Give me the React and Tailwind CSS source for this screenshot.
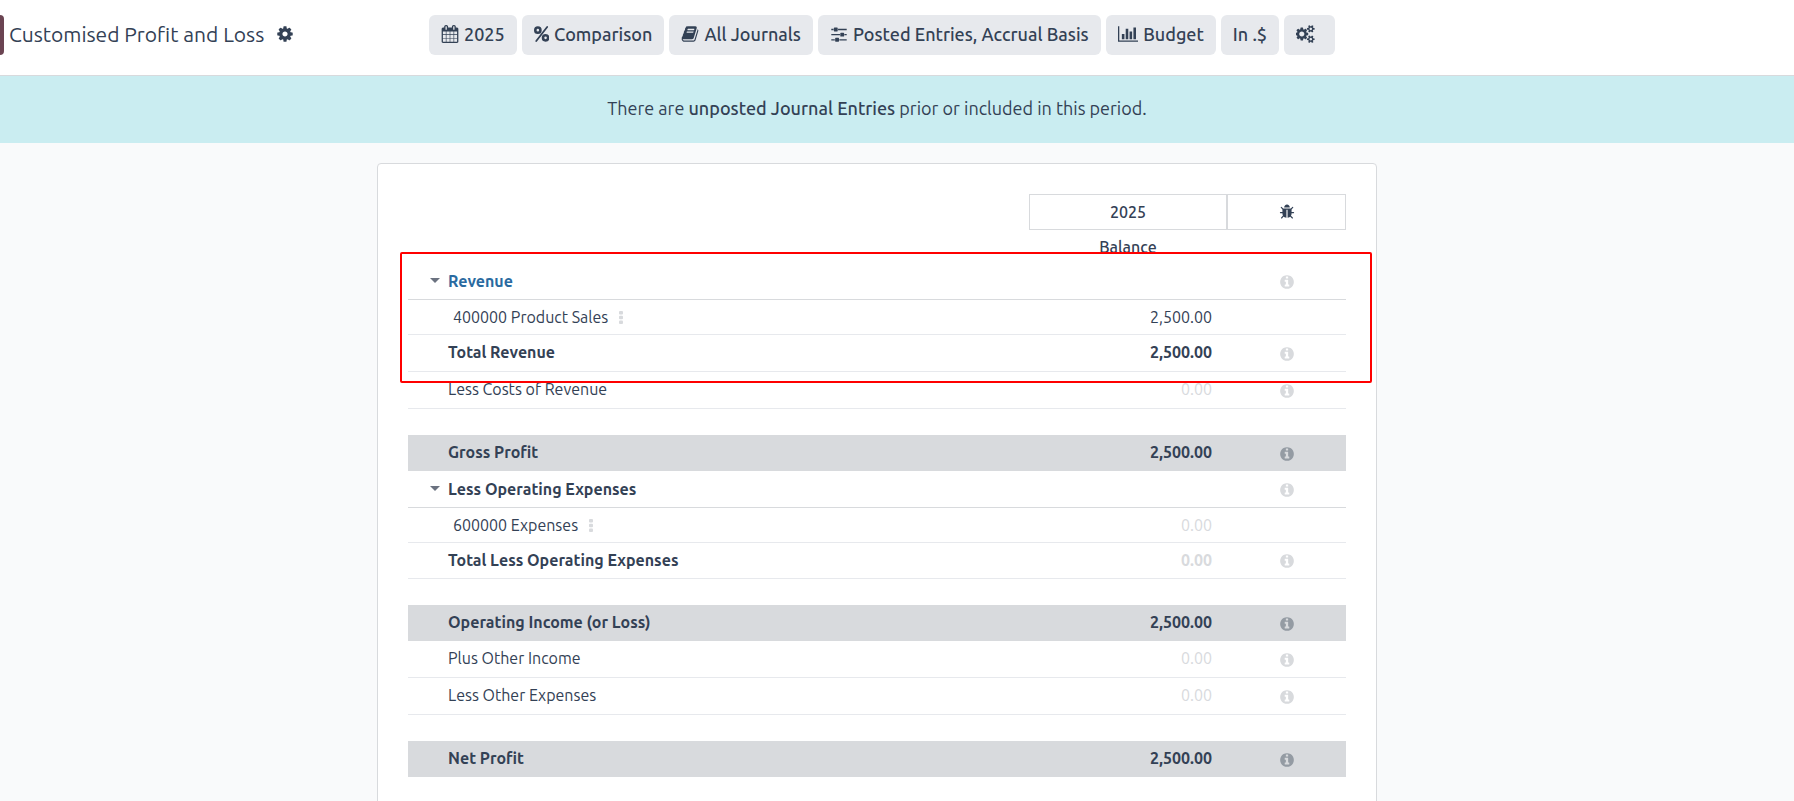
import { useState } from "react";

const ICONS = {
  cog: {
    width: 1792,
    path: "M1152 896q0-106-75-181t-181-75-181 75-75 181 75 181 181 75 181-75 75-181zm512-109v222q0 12-8 23t-20 13l-185 28q-19 54-39 91 35 50 107 138 10 12 10 25t-9 23q-27 37-99 108t-94 71q-12 0-26-9l-138-108q-44 23-91 38-16 136-29 186-7 28-36 28h-222q-14 0-24.5-8.5t-11.5-21.5l-28-184q-49-16-90-37l-141 107q-10 9-25 9-14 0-25-11-126-114-165-168-7-10-7-23 0-12 8-23 15-21 51-66.5t54-70.5q-27-50-41-99l-183-27q-13-2-21-12.5t-8-23.5v-222q0-12 8-23t19-13l186-28q14-46 39-92-40-57-107-138-10-12-10-24 0-10 9-23 26-36 98.5-107.5t94.5-71.5q13 0 26 10l138 107q44-23 91-38 16-136 29-186 7-28 36-28h222q14 0 24.5 8.5t11.5 21.5l28 184q49 16 90 37l142-107q9-9 24-9 13 0 25 10 129 119 165 170 7 8 7 22 0 12-8 23-15 21-51 66.5t-54 70.5q26 50 41 98l183 28q13 2 21 12.5t8 23.5z",
  },
  cogs: {
    width: 1920,
    path: "M832 896q0-106-75-181t-181-75-181 75-75 181 75 181 181 75 181-75 75-181zm768 512q0-52-38-90t-90-38-90 38-38 90q0 53 37.5 90.5t90.5 37.5 90.5-37.5 37.5-90.5zm0-1024q0-52-38-90t-90-38-90 38-38 90q0 53 37.5 90.5t90.5 37.5 90.5-37.5 37.5-90.5zm-384 421v185q0 10-7 19.5t-16 10.5l-155 24q-11 35-32 76 34 48 90 115 7 11 7 20 0 12-7 19-23 30-82.5 89.5t-78.5 59.5q-11 0-21-7l-115-90q-37 19-77 31-11 108-23 155-7 24-30 24h-186q-11 0-20-7.5t-10-17.5l-23-153q-34-10-75-31l-118 89q-7 7-20 7-11 0-21-8-144-133-144-160 0-9 7-19 10-14 41-53t47-61q-23-44-35-82l-152-24q-10-1-17-9.5t-7-19.5v-185q0-10 7-19.5t16-10.5l155-24q11-35 32-76-34-48-90-115-7-11-7-20 0-12 7-20 22-30 82-89t79-59q11 0 21 7l115 90q34-18 77-32 11-108 23-154 7-24 30-24h186q11 0 20 7.5t10 17.5l23 153q34 10 75 31l118-89q8-7 20-7 11 0 21 8 144 133 144 160 0 8-7 19-12 16-42 54t-45 60q23 48 34 82l152 23q10 2 17 10.5t7 19.5zm640 533v140q0 16-149 31-12 27-30 52 51 113 51 138 0 4-4 7-122 71-124 71-8 0-46-47t-52-68q-20 2-30 2t-30-2q-14 21-52 68t-46 47q-2 0-124-71-4-3-4-7 0-25 51-138-18-25-30-52-149-15-149-31v-140q0-16 149-31 13-29 30-52-51-113-51-138 0-4 4-7 4-2 35-20t59-34 30-16q8 0 46 46.5t52 67.5q20-2 30-2t30 2q51-71 92-112l6-2q4 0 124 70 4 3 4 7 0 25-51 138 17 23 30 52 149 15 149 31zm0-1024v140q0 16-149 31-12 27-30 52 51 113 51 138 0 4-4 7-122 71-124 71-8 0-46-47t-52-68q-20 2-30 2t-30-2q-14 21-52 68t-46 47q-2 0-124-71-4-3-4-7 0-25 51-138-18-25-30-52-149-15-149-31v-140q0-16 149-31 13-29 30-52-51-113-51-138 0-4 4-7 4-2 35-20t59-34 30-16q8 0 46 46.5t52 67.5q20-2 30-2t30 2q51-71 92-112l6-2q4 0 124 70 4 3 4 7 0 25-51 138 17 23 30 52 149 15 149 31z",
  },
  calendar: {
    width: 1792,
    path: "M192 1664h288v-288h-288v288zm352 0h320v-288h-320v288zm-352-352h288v-320h-288v320zm352 0h320v-320h-320v320zm-352-384h288v-288h-288v288zm736 736h320v-288h-320v288zm-384-736h320v-288h-320v288zm768 736h288v-288h-288v288zm-384-352h320v-320h-320v320zm-352-864v-288q0-13-9.5-22.5t-22.5-9.5h-64q-13 0-22.5 9.5t-9.5 22.5v288q0 13 9.5 22.5t22.5 9.5h64q13 0 22.5-9.5t9.5-22.5zm736 864h288v-320h-288v320zm-384-384h320v-288h-320v288zm384 0h288v-288h-288v288zm32-480v-288q0-13-9.5-22.5t-22.5-9.5h-64q-13 0-22.5 9.5t-9.5 22.5v288q0 13 9.5 22.5t22.5 9.5h64q13 0 22.5-9.5t9.5-22.5zm384-64v1280q0 52-38 90t-90 38h-1408q-52 0-90-38t-38-90v-1280q0-52 38-90t90-38h128v-96q0-66 47-113t113-47h64q66 0 113 47t47 113v96h384v-96q0-66 47-113t113-47h64q66 0 113 47t47 113v96h128q52 0 90 38t38 90z",
  },
  book: {
    width: 1792,
    path: "M1703 478q40 57 18 129l-275 906q-19 64-76.5 107.5t-122.5 43.5h-923q-77 0-148.5-53.5t-99.5-131.5q-24-67-2-127 0-4 3-27t4-37q1-8-3-21.5t-3-19.5q2-11 8-21t16.5-23.5 16.5-23.5q23-38 45-91.5t30-91.5q3-10 .5-30t-.5-28q3-11 17-28t17-23q21-36 42-92t25-90q1-9-2.5-32t.5-28q4-13 22-30.5t22-22.5q19-26 42.5-84.5t27.5-96.5q1-8-3-25.5t-2-26.5q2-8 9-18t18-23 17-21q8-12 16.5-30.5t15-35 16-36 19.5-32 26.5-23.5 36-11.5 47.5 5.5l-1 3q38-9 51-9h761q74 0 114 56t18 130l-274 906q-36 119-71.5 153.5t-128.5 34.5h-869q-27 0-38 15-11 16-1 43 24 70 144 70h923q29 0 56-15.5t35-41.5l300-987q7-22 5-57 38 15 59 43zm-1064 2q-4 13 2 22.5t20 9.5h608q13 0 25.5-9.5t16.5-22.5l21-64q4-13-2-22.5t-20-9.5h-608q-13 0-25.5 9.5t-16.5 22.5zm-83 256q-4 13 2 22.5t20 9.5h608q13 0 25.5-9.5t16.5-22.5l21-64q4-13-2-22.5t-20-9.5h-608q-13 0-25.5 9.5t-16.5 22.5z",
  },
  sliders: {
    width: 1792,
    path: "M480 1408v128h-352v-128h352zm352-128q26 0 45 19t19 45v256q0 26-19 45t-45 19h-256q-26 0-45-19t-19-45v-256q0-26 19-45t45-19h256zm160-384v128h-864v-128h864zm-640-512v128h-224v-128h224zm1312 1024v128h-736v-128h736zm-960-1152q26 0 45 19t19 45v256q0 26-19 45t-45 19h-256q-26 0-45-19t-19-45v-256q0-26 19-45t45-19h256zm640 512q26 0 45 19t19 45v256q0 26-19 45t-45 19h-256q-26 0-45-19t-19-45v-256q0-26 19-45t45-19h256zm320 128v128h-224v-128h224zm0-512v128h-864v-128h864z",
  },
  barChart: {
    width: 2048,
    path: "M640 896v512h-256v-512h256zm384-512v1024h-256v-1024h256zm1024 1152v128h-2048v-1536h128v1408h1920zm-640-896v768h-256v-768h256zm384-384v1152h-256v-1152h256z",
  },
  bug: {
    width: 1792,
    path: "M1696 960q0 26-19 45t-45 19h-224q0 171-67 290l208 209q19 19 19 45t-19 45q-18 19-45 19t-45-19l-198-197q-5 5-15 13t-42 28.5-65 36.5-82 29-97 13v-896h-128v896q-51 0-101.5-13.5t-87-33-66-39-43.5-32.5l-15-14-183 207q-20 21-48 21-24 0-43-16-19-18-20.5-44.5t15.5-46.5l202-227q-58-114-58-274h-224q-26 0-45-19t-19-45 19-45 45-19h224v-294l-173-173q-19-19-19-45t19-45 45-19 45 19l173 173h844l173-173q19-19 45-19t45 19 19 45-19 45l-173 173v294h224q26 0 45 19t19 45zm-480-576h-640q0-133 93.5-226.5t226.5-93.5 226.5 93.5 93.5 226.5z",
  },
  info: {
    width: 1792,
    path: "M1152 1376v-160q0-14-9-23t-23-9h-96v-512q0-14-9-23t-23-9h-320q-14 0-23 9t-9 23v160q0 14 9 23t23 9h96v320h-96q-14 0-23 9t-9 23v160q0 14 9 23t23 9h448q14 0 23-9t9-23zm-128-896v-160q0-14-9-23t-23-9h-192q-14 0-23 9t-9 23v160q0 14 9 23t23 9h192q14 0 23-9t9-23zm640 416q0 209-103 385.5t-279.5 279.5-385.5 103-385.5-103-279.5-279.5-103-385.5 103-385.5 279.5-279.5 385.5-103 385.5 103 279.5 279.5 103 385.5z",
  },
};

const filters = [
  { label: "2025", icon: "calendar" },
  { label: "Comparison", icon: "percent" },
  { label: "All Journals", icon: "book" },
  { label: "Posted Entries, Accrual Basis", icon: "sliders" },
  { label: "Budget", icon: "barChart" },
  { label: "In .$" },
];

const sections = [
  [
    { type: "group", name: "Revenue", info: true, link: true },
    { type: "account", name: "400000 Product Sales", balance: "2,500.00" },
    { type: "line", name: "Total Revenue", balance: "2,500.00", info: true, bold: true },
    { type: "line", name: "Less Costs of Revenue", balance: "0.00", info: true },
  ],
  [
    { type: "summary", name: "Gross Profit", balance: "2,500.00", info: true },
    { type: "group", name: "Less Operating Expenses", info: true },
    { type: "account", name: "600000 Expenses", balance: "0.00" },
    { type: "total", name: "Total Less Operating Expenses", balance: "0.00", info: true },
  ],
  [
    { type: "summary", name: "Operating Income (or Loss)", balance: "2,500.00", info: true },
    { type: "line", name: "Plus Other Income", balance: "0.00", info: true },
    { type: "line", name: "Less Other Expenses", balance: "0.00", info: true },
  ],
  [{ type: "summary", name: "Net Profit", balance: "2,500.00", info: true }],
];

const rowStyles = {
  group: "h-[37px] pb-px border-b border-[#d8dadd] font-bold",
  account: "h-[35px] border-b border-[#e7e9ed]",
  total: "h-9 pb-0.5 border-b border-[#e7e9ed] font-bold",
  line: "h-[37px] pb-0.5 border-b border-[#e7e9ed]",
  summary: "h-9 pb-0.5 bg-[#d8dadd] font-bold",
};

function App() {
  return (
    <div className="min-h-screen overflow-x-hidden bg-[#f9fafb] font-['Ubuntu','Noto_Sans',sans-serif] text-[#334155]">
      <header className="grid grid-cols-[429px_1fr] items-center border-b border-[#d8dadd] bg-white pt-[15px] pb-5">
        <div className="flex items-center">
          <button type="button" aria-label="New" className="h-10 w-1 rounded-r bg-[#6b4452]" />
          <h1 className="ml-[5px] pb-0.5 text-[21px] leading-7 whitespace-nowrap">Customised Profit and Loss</h1>
          <button type="button" aria-label="Actions" className="ml-3 pb-0.5">
            <Icon name="cog" className="h-[18px]" />
          </button>
        </div>

        <div className="flex gap-[5px]">
          {filters.map((filter) => (
            <FilterButton key={filter.label}>
              {filter.icon && <Icon name={filter.icon} className="h-[18px]" />}
              {filter.label}
            </FilterButton>
          ))}
          <FilterButton label="Options">
            <Icon name="cogs" className="mr-2 h-[18px]" />
          </FilterButton>
        </div>
      </header>

      <div className="bg-[#caedf1] pt-5 pr-10 pb-[23px] text-center text-lg leading-6">
        There are{" "}
        <a href="#entries" className="font-medium">
          unposted Journal Entries
        </a>{" "}
        prior or included in this period.
      </div>

      <main className="pt-5 pr-10">
        <div className="mx-auto min-h-[660px] max-w-[1000px] rounded border border-[#d8dadd] bg-white px-[30px] pt-[30px]">
          <Report />
        </div>
      </main>
    </div>
  );
}

function Report() {
  const [folded, setFolded] = useState([]);

  const toggle = (name) => {
    setFolded(folded.includes(name) ? folded.filter((n) => n !== name) : [...folded, name]);
  };

  return (
    <div className="relative">
      <table className="w-full table-fixed border-separate border-spacing-0 text-base leading-6">
        <colgroup>
          <col />
          <col className="w-[198px]" />
          <col className="w-[119px]" />
        </colgroup>
        <thead>
          <tr className="h-9">
            <td />
            <th className="border border-[#d8dadd] p-0 font-medium">2025</th>
            <th className="border border-[#d8dadd] p-0">
              <button type="button" aria-label="Debug" className="block w-full">
                <Icon name="bug" className="mx-auto h-4" />
              </button>
            </th>
          </tr>
          <tr className="h-[33px]">
            <td />
            <th className="p-0 font-medium">Balance</th>
            <td />
          </tr>
        </thead>
        {sections.map((rows, index) => (
          <tbody key={rows[0].name}>
            {index > 0 && (
              <tr className="h-[26px]">
                <td colSpan={3} className="p-0" />
              </tr>
            )}
            {rows.map((row, i) => {
              if (row.type === "account" && folded.includes(rows[i - 1].name)) return null;
              return <ReportRow key={row.name} row={row} onToggle={() => toggle(row.name)} />;
            })}
          </tbody>
        ))}
      </table>

      {/* Highlight around the revenue block */}
      <div className="pointer-events-none absolute top-[58px] -right-[26px] -left-2 h-[131px] rounded-xs border-2 border-[#ff0000]" />
    </div>
  );
}

function ReportRow({ row, onToggle }) {
  const cell = `px-0 pt-0 ${rowStyles[row.type]} ${row.bold ? "font-bold" : ""}`;
  const muted = row.balance === "0.00" ? "text-[#d8dadd]" : "";
  const infoColor = row.type === "summary" ? "text-[#949ba3]" : "text-[#d8dadd]";

  return (
    <tr>
      <td className={cell}>
        <div className="flex items-center">
          <div className="flex w-10 shrink-0 justify-end pr-2">
            {row.type === "group" && (
              <button type="button" aria-label={`Fold ${row.name}`} onClick={onToggle}>
                <svg viewBox="0 0 10 5" className="h-[5px] w-2.5 fill-[#6b7280]">
                  <path d="M0 0h10L5 5z" />
                </svg>
              </button>
            )}
          </div>
          <span className={row.link ? "text-[#2a6aa0]" : row.type === "account" ? "pl-[5px]" : ""}>{row.name}</span>
          {row.type === "account" && (
            <button type="button" aria-label={`${row.name} options`} className="ml-[11px] text-[#d8dadd]">
              <svg viewBox="0 0 4 13" className="h-[13px] w-1 fill-current">
                <rect width="4" height="3.4" rx="1" />
                <rect y="4.8" width="4" height="3.4" rx="1" />
                <rect y="9.6" width="4" height="3.4" rx="1" />
              </svg>
            </button>
          )}
        </div>
      </td>
      <td className={`${cell} text-right`}>
        <span className={`pr-[15px] ${muted}`}>{row.balance}</span>
      </td>
      <td className={cell}>
        {row.info && (
          <button type="button" aria-label={`About ${row.name}`} className={`mx-auto block pt-[3px] ${infoColor}`}>
            <Icon name="info" className="h-4" />
          </button>
        )}
      </td>
    </tr>
  );
}

function FilterButton({ label, children }) {
  return (
    <button
      type="button"
      aria-label={label}
      className="flex h-10 items-center gap-[5px] rounded-md bg-[#e7e9ed] px-3 pb-0.5 text-lg font-medium whitespace-nowrap"
    >
      {children}
    </button>
  );
}

function Icon({ name, className }) {
  if (name === "percent") {
    return (
      <svg viewBox="0 0 1536 1792" className={`w-auto ${className}`} fill="none" stroke="currentColor">
        <circle cx="384" cy="512" r="256" strokeWidth="256" />
        <circle cx="1152" cy="1280" r="256" strokeWidth="256" />
        <path d="M1312 192L224 1600" strokeWidth="180" strokeLinecap="round" />
      </svg>
    );
  }

  const icon = ICONS[name];
  return (
    <svg viewBox={`0 0 ${icon.width} 1792`} className={`w-auto ${className}`} fill="currentColor">
      <path d={icon.path} />
    </svg>
  );
}

export default App;
